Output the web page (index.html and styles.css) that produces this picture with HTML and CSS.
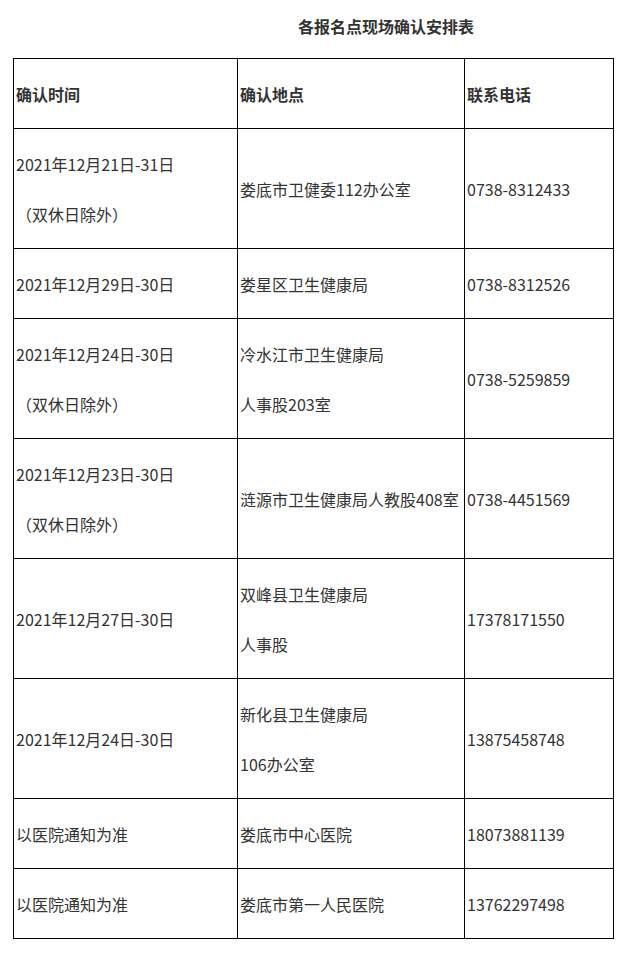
FILE: index.html
```html
<!DOCTYPE html>
<html lang="zh-CN">
<head>
<meta charset="utf-8">
<title>各报名点现场确认安排表</title>
<link rel="stylesheet" href="styles.css">
</head>
<body>
<div class="page">
  <h1 class="title">各报名点现场确认安排表</h1>
  <table class="sched">
    <colgroup>
      <col class="c1"><col class="c2"><col class="c3">
    </colgroup>
    <tr class="head">
      <td><b>确认时间</b></td>
      <td><b>确认地点</b></td>
      <td><b>联系电话</b></td>
    </tr>
    <tr>
      <td><div>2021年12月21日-31日</div><div>（双休日除外）</div></td>
      <td><div>娄底市卫健委112办公室</div></td>
      <td><div>0738-8312433</div></td>
    </tr>
    <tr>
      <td><div>2021年12月29日-30日</div></td>
      <td><div>娄星区卫生健康局</div></td>
      <td><div>0738-8312526</div></td>
    </tr>
    <tr>
      <td><div>2021年12月24日-30日</div><div>（双休日除外）</div></td>
      <td><div>冷水江市卫生健康局</div><div>人事股203室</div></td>
      <td><div>0738-5259859</div></td>
    </tr>
    <tr>
      <td><div>2021年12月23日-30日</div><div>（双休日除外）</div></td>
      <td><div>涟源市卫生健康局人教股408室</div></td>
      <td><div>0738-4451569</div></td>
    </tr>
    <tr>
      <td><div>2021年12月27日-30日</div></td>
      <td><div>双峰县卫生健康局</div><div>人事股</div></td>
      <td><div>17378171550</div></td>
    </tr>
    <tr>
      <td><div>2021年12月24日-30日</div></td>
      <td><div>新化县卫生健康局</div><div>106办公室</div></td>
      <td><div>13875458748</div></td>
    </tr>
    <tr>
      <td><div>以医院通知为准</div></td>
      <td><div>娄底市中心医院</div></td>
      <td><div>18073881139</div></td>
    </tr>
    <tr>
      <td><div>以医院通知为准</div></td>
      <td><div>娄底市第一人民医院</div></td>
      <td><div>13762297498</div></td>
    </tr>
  </table>
</div>
</body>
</html>
```
FILE: styles.css
```css
html, body {
  margin: 0;
  padding: 0;
  background: #fff;
}
body {
  font-family: "Noto Sans CJK SC", "Noto Sans", sans-serif;
  font-size: 16px;
  color: #333;
}
.page {
  padding: 14px 0 0 13px;
  width: 600px;
}
.title {
  margin: 0;
  padding-left: 146px;
  text-align: center;
  font-size: 16px;
  font-weight: bold;
  line-height: 24px;
  color: #333;
}
.sched {
  margin-top: 20px;
  width: 600px;
  border-collapse: collapse;
  table-layout: fixed;
}
.c1 { width: 224px; }
.c2 { width: 227px; }
.c3 { width: 149px; }
.sched td {
  border: 1px solid #000;
  padding: 10px 2px 9px 2px;
  vertical-align: middle;
  line-height: 50px;
  white-space: nowrap;
  overflow: hidden;
}
.sched td div {
  margin: 0;
}
.sched b {
  font-weight: bold;
}
```
